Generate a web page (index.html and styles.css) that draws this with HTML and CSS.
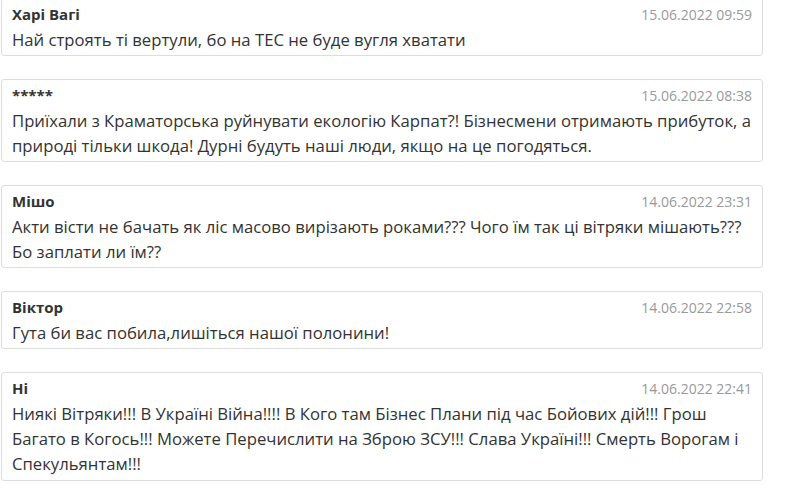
FILE: index.html
```html
<!DOCTYPE html>
<html lang="uk">
<head>
<meta charset="utf-8">
<title>Коментарі</title>
<link rel="stylesheet" href="styles.css">
</head>
<body>
<div class="comments">
  <div class="comment">
    <div class="comment-head"><span class="author">Харі Вагі</span><span class="date">15.06.2022 09:59</span></div>
    <div class="comment-text">Най строять ті вертули, бо на ТЕС не буде вугля хватати</div>
  </div>
  <div class="comment">
    <div class="comment-head"><span class="author">*****</span><span class="date">15.06.2022 08:38</span></div>
    <div class="comment-text">Приїхали з Краматорська руйнувати екологію Карпат?! Бізнесмени отримають прибуток, а природі тільки шкода! Дурні будуть наші люди, якщо на це погодяться.</div>
  </div>
  <div class="comment">
    <div class="comment-head"><span class="author">Мішо</span><span class="date">14.06.2022 23:31</span></div>
    <div class="comment-text">Акти вісти не бачать як ліс масово вирізають роками??? Чого їм так ці вітряки мішають??? Бо заплати ли їм??</div>
  </div>
  <div class="comment">
    <div class="comment-head"><span class="author">Віктор</span><span class="date">14.06.2022 22:58</span></div>
    <div class="comment-text">Гута би вас побила,лишіться нашої полонини!</div>
  </div>
  <div class="comment">
    <div class="comment-head"><span class="author">Ні</span><span class="date">14.06.2022 22:41</span></div>
    <div class="comment-text">Ниякі Вітряки!!! В Україні Війна!!!! В Кого там Бізнес Плани під час Бойових дій!!! Грош Багато в Когось!!! Можете Перечислити на Зброю ЗСУ!!! Слава Україні!!! Смерть Ворогам і Спекульянтам!!!</div>
  </div>
</div>
</body>
</html>
```
FILE: styles.css
```css
html, body {
  margin: 0;
  padding: 0;
  background: #ffffff;
}
body {
  font-family: "Open Sans", "Noto Sans", sans-serif;
  color: #333333;
  overflow: hidden;
}
.comments {
  width: 762px;
  margin: -2px 0 0 1px;
  display: flex;
  flex-direction: column;
  gap: 22.5px;
}
.comment {
  border: 1px solid #dddddd;
  border-radius: 3px;
  padding: 4px 10px 3px 10px;
  background: #ffffff;
}
.comment-head {
  display: flex;
  justify-content: space-between;
  align-items: baseline;
  height: 22px;
  line-height: 22px;
  overflow: visible;
}
.author {
  font-weight: 700;
  font-size: 15px;
  color: #333333;
}
.date {
  font-size: 14px;
  color: #999999;
}
.comment-text {
  margin-top: 2px;
  font-size: 16.7px;
  line-height: 25.3px;
  color: #333333;
}
```
